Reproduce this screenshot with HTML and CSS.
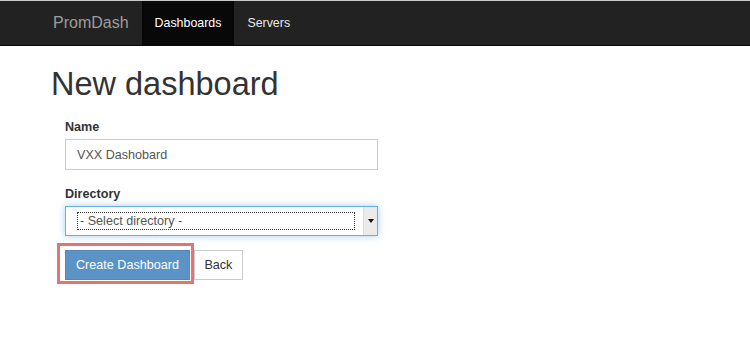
FILE: index.html
```html
<!DOCTYPE html>
<html lang="en">
<head>
  <meta charset="UTF-8" />
  <title>PromDash - New dashboard</title>
  <link rel="stylesheet" href="styles.css">
</head>
<body>

<header class="navbar">
  <a class="brand" href="#">PromDash</a>
  <ul class="nav">
    <li class="active"><a href="#">Dashboards</a></li>
    <li><a href="#">Servers</a></li>
  </ul>
</header>

<main>
  <h1>New dashboard</h1>

  <form class="dash-form">
    <div class="form-group">
      <label for="name">Name</label>
      <input id="name" class="form-control" type="text" value="VXX Dashobard">
    </div>

    <div class="form-group">
      <label>Directory</label>
      <div class="select focused">
        <span class="select-value"><span class="focus-ring">- Select directory -</span></span>
        <span class="select-arrow"></span>
      </div>
    </div>

    <div class="actions">
      <span class="highlight">
        <button type="button" class="btn btn-primary">Create Dashboard</button>
      </span>
      <button type="button" class="btn btn-default">Back</button>
    </div>
  </form>
</main>

</body>
</html>
```

FILE: styles.css
```css
/* Reset */
* {
  box-sizing: border-box;
}

body {
  margin: 0;
  font-family: "Liberation Sans", Arial, sans-serif;
  font-size: 12.6px;
  line-height: 18px;
  color: #333;
  background: #fff;
}

/* Navbar */
.navbar {
  display: flex;
  height: 46px;
  padding-left: 40px;
  background: #222;
  border-top: 1px solid #c9c9c9;
  border-bottom: 1px solid #080808;
}

.brand {
  padding: 0 13px;
  line-height: 44px;
  font-size: 16px;
  color: #9d9d9d;
  text-decoration: none;
}

.nav {
  display: flex;
  list-style: none;
  margin: 0;
  padding: 0;
}

.nav li a {
  display: block;
  padding: 0 13px;
  line-height: 44px;
  font-size: 12.4px;
  color: #e8e8e8;
  text-decoration: none;
}

.nav li.active a {
  background: #080808;
  color: #fff;
}

/* Page */
main {
  padding-left: 51px;
}

h1 {
  margin: 21px 0 0;
  font-size: 32.5px;
  font-weight: normal;
  line-height: 35px;
}

.dash-form {
  padding-left: 14px;
  margin-top: 16px;
}

.form-group {
  margin-bottom: 15px;
}

label {
  display: block;
  font-weight: bold;
  margin-bottom: 3px;
}

.form-control {
  display: block;
  width: 313px;
  height: 31px;
  padding: 0 11px;
  font: inherit;
  color: #555;
  border: 1px solid #ccc;
  background: #fff;
}

/* Fake select, drawn in the old focused style */
.select {
  display: flex;
  width: 313px;
  height: 30px;
  border: 1px solid #ccc;
  background: #fff;
  color: #555;
}

.select.focused {
  border-color: #66afe9;
  box-shadow: 0 0 7px rgba(102, 175, 233, 0.6);
}

.select-value {
  flex: 1;
  padding: 5px 8px 5px 11px;
}

.focus-ring {
  display: block;
  height: 18px;
  padding-left: 2px;
  line-height: 16px;
  border: 1px dotted #333;
}

.select-arrow {
  position: relative;
  width: 14px;
  background: #ebebeb;
  border-left: 1px solid #ddd;
}

.select-arrow::after {
  content: "";
  position: absolute;
  left: 4px;
  top: 12px;
  border-left: 3px solid transparent;
  border-right: 3px solid transparent;
  border-top: 4px solid #111;
}

/* Buttons */
.actions {
  display: flex;
  align-items: flex-start;
  margin-top: -8px;
}

.highlight {
  display: inline-flex;
  margin-left: -8px;
  padding: 4px 1px 1px 5px;
  border: 3px solid #e57373;
}

.btn {
  height: 30px;
  padding: 0 10px;
  font: inherit;
  border: 1px solid transparent;
  cursor: pointer;
}

.btn-primary {
  background: #5b93c6;
  border-color: #5288bb;
  color: #fff;
}

.btn-default {
  margin: 7px 0 0 0;
  padding: 0 9.5px;
  background: #fff;
  border-color: #ccc;
  color: #333;
}
```
